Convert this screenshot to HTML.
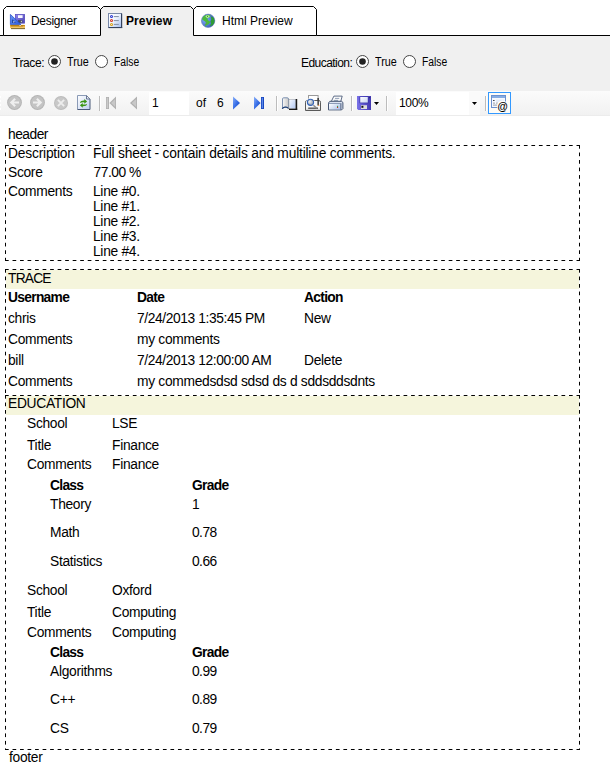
<!DOCTYPE html>
<html><head><meta charset="utf-8">
<style>
html,body{margin:0;padding:0;width:610px;height:781px;overflow:hidden;background:#fff;font-family:"Liberation Sans",sans-serif;color:#000;}
.a{position:absolute;white-space:nowrap;}
.u{font-size:12px;line-height:14px;}
.t{font-size:13.8px;line-height:15px;letter-spacing:-0.3px;}
.n{letter-spacing:-0.55px;}
.b{font-weight:bold;}
.t.b{letter-spacing:-0.7px;}
.sx{transform-origin:0 0;}
svg{position:absolute;overflow:visible;}
</style></head><body>
<!-- TAB STRIP -->
<svg style="left:0;top:0" width="610" height="37" viewBox="0 0 610 37">
  <rect x="0" y="36" width="610" height="1" fill="#f0f0f0"/>
  <path d="M3.5,36 V9.5 L6.5,6.5 H97.5 L100.5,9.5 V36 Z" fill="#fff"/>
  <path d="M100.5,37 V9.5 L103.5,6.5 H190.5 L193.5,9.5 V37 Z" fill="#f0f0f0"/>
  <path d="M193.5,36 V9.5 L196.5,6.5 H313.5 L316.5,9.5 V36 Z" fill="#fff"/>
  <path d="M0,35.5 H3.5 V9.5 L6.5,6.5 H97.5 L100.5,9.5 L103.5,6.5 H190.5 L193.5,9.5 L196.5,6.5 H313.5 L316.5,9.5 V35.5 H610" fill="none" stroke="#000" stroke-width="1"/>
  <path d="M100.5,9.5 V35.5 M193.5,9.5 V35.5 M3.5,35.5 H100.5 M193.5,35.5 H316.5" fill="none" stroke="#000" stroke-width="1"/>
</svg>
<!-- designer icon -->
<svg style="left:9px;top:13px" width="17" height="17" viewBox="0 0 17 17">
  <defs><linearGradient id="dfl" x1="0" y1="0" x2="1" y2="1"><stop offset="0" stop-color="#9088ee"/><stop offset="1" stop-color="#4a40b0"/></linearGradient>
  <linearGradient id="dtr" x1="0" y1="0" x2="1" y2="1"><stop offset="0" stop-color="#6a9af8"/><stop offset="1" stop-color="#2a58d8"/></linearGradient>
  <linearGradient id="dru" x1="0" y1="0" x2="0" y2="1"><stop offset="0" stop-color="#e0a020"/><stop offset="1" stop-color="#f8d078"/></linearGradient></defs>
  <rect x="6.2" y="1.2" width="9.6" height="9.2" fill="url(#dfl)"/>
  <rect x="6.6" y="1.6" width="8.8" height="8.4" fill="none" stroke="#5a50c0" stroke-width="0.7"/>
  <rect x="9" y="2.2" width="4.6" height="2.8" fill="#f8f8ff"/>
  <rect x="9" y="7.2" width="4.4" height="2.6" fill="#404858"/>
  <rect x="11.8" y="7.8" width="1.2" height="1.4" fill="#c0c8d0"/>
  <polygon points="1.4,1.4 1.4,11.6 12,11.6" fill="url(#dtr)" stroke="#2a50c8" stroke-width="0.8"/>
  <polygon points="3.2,6.2 3.2,10 6.8,10" fill="#183a90"/>
  <rect x="4.2" y="8.3" width="1.2" height="1.2" fill="#fff"/>
  <rect x="1" y="12" width="15" height="3.2" fill="url(#dru)"/>
  <path d="M1.5,12.4 H15.5" stroke="#b07a10" stroke-width="0.8"/>
  <path d="M3,12.4 V13.8 M5,12.4 V13.8 M7,12.4 V13.8 M9,12.4 V13.8 M11,12.4 V13.8 M13,12.4 V13.8" stroke="#a07010" stroke-width="0.8"/>
  <rect x="10.6" y="12" width="1" height="1" fill="#fff"/>
  <rect x="2" y="15.2" width="14" height="0.9" fill="#6a5008"/>
</svg>
<div class="a u" style="left:31px;top:14px;letter-spacing:-0.3px">Designer</div>
<!-- preview icon -->
<svg style="left:108px;top:13px" width="15" height="16" viewBox="0 0 15 16">
  <defs><linearGradient id="pg" x1="0" y1="0" x2="1" y2="1"><stop offset="0" stop-color="#ffffff"/><stop offset="0.45" stop-color="#eef4ff"/><stop offset="1" stop-color="#a4bcec"/></linearGradient></defs>
  <rect x="0.5" y="0.5" width="13" height="14" fill="url(#pg)" stroke="#7888a8"/>
  <rect x="13" y="0.6" width="1.2" height="14.4" fill="#34425e"/>
  <rect x="0.6" y="14" width="13.6" height="1.1" fill="#34425e"/>
  <circle cx="3.5" cy="3.5" r="1.5" fill="#2a36d0"/><circle cx="3.5" cy="3.5" r="0.5" fill="#e8ecff"/>
  <circle cx="3.5" cy="7.5" r="1.5" fill="#d03a2a"/><circle cx="3.5" cy="7.5" r="0.5" fill="#ffe8e0"/>
  <circle cx="3.5" cy="11.4" r="1.5" fill="#d8a018"/><circle cx="3.5" cy="11.4" r="0.5" fill="#fff8d8"/>
  <rect x="5.8" y="3" width="5" height="1.1" fill="#8a96aa"/>
  <rect x="5.8" y="7" width="5" height="1.1" fill="#8a96aa"/>
  <rect x="5.8" y="10.9" width="5" height="1.1" fill="#8a96aa"/>
</svg>
<div class="a u b" style="left:126px;top:14px;letter-spacing:0.1px">Preview</div>
<!-- globe icon -->
<svg style="left:201px;top:14px" width="14" height="14" viewBox="0 0 14 14">
  <defs><radialGradient id="gb" cx="0.3" cy="0.4" r="0.8"><stop offset="0" stop-color="#80b0ff"/><stop offset="1" stop-color="#3050b0"/></radialGradient>
  <clipPath id="gc"><circle cx="7.1" cy="6.8" r="6.5"/></clipPath></defs>
  <circle cx="7.1" cy="6.8" r="6.7" fill="url(#gb)" stroke="#5a70a8" stroke-width="0.5"/>
  <g clip-path="url(#gc)">
  <path d="M1,4.2 C2,1.2 5.5,0 9.6,1 L8.8,3.3 L6.2,4.5 L7.4,6.4 L9.4,8 L7.6,10.2 L5.4,11.2 L4.6,13 L4,10.6 L5.4,9 L4.2,7.6 L1.4,5.8 Z" fill="#4cb83c"/>
  <path d="M9.8,2.2 L12.6,3.4 L14,6.6 L13.4,9.6 L11.2,11.4 L8.6,12 L10.2,9.6 L9.4,7.4 L10.4,5.2 Z" fill="#2e9c34"/>
  <ellipse cx="6.6" cy="2.6" rx="2" ry="1.4" fill="#b0ec98"/>
  <circle cx="6.5" cy="2.3" r="0.55" fill="#1e6a28"/>
  <path d="M4.2,7.6 L5.4,9 L4,10.6" fill="none" stroke="#7a6a30" stroke-width="0.5" opacity="0.6"/>
  </g>
</svg>
<div class="a u" style="left:222px;top:14px">Html Preview</div>

<!-- PARAMETER PANEL -->
<div class="a" style="left:0;top:36px;width:610px;height:55px;background:#f0f0f0"></div>
<div class="a u" style="left:13px;top:56px;letter-spacing:-0.4px">Trace:</div>
<svg style="left:48px;top:55px" width="13" height="13" viewBox="0 0 13 13">
  <circle cx="6.5" cy="6.5" r="6" fill="#fff" stroke="#454545" stroke-width="1"/>
  <circle cx="6.5" cy="6.5" r="3.3" fill="#222"/>
</svg>
<div class="a u sx" style="left:67px;top:55px;transform:scaleX(0.9)">True</div>
<svg style="left:95px;top:55px" width="13" height="13" viewBox="0 0 13 13">
  <circle cx="6.5" cy="6.5" r="6" fill="#fff" stroke="#454545" stroke-width="1"/>
</svg>
<div class="a u sx" style="left:114px;top:55px;transform:scaleX(0.86)">False</div>

<div class="a u" style="left:301px;top:56px;letter-spacing:-0.55px">Education:</div>
<svg style="left:356px;top:55px" width="13" height="13" viewBox="0 0 13 13">
  <circle cx="6.5" cy="6.5" r="6" fill="#fff" stroke="#454545" stroke-width="1"/>
  <circle cx="6.5" cy="6.5" r="3.3" fill="#222"/>
</svg>
<div class="a u sx" style="left:375px;top:55px;transform:scaleX(0.9)">True</div>
<svg style="left:403px;top:55px" width="13" height="13" viewBox="0 0 13 13">
  <circle cx="6.5" cy="6.5" r="6" fill="#fff" stroke="#454545" stroke-width="1"/>
</svg>
<div class="a u sx" style="left:422px;top:55px;transform:scaleX(0.86)">False</div>

<!-- TOOLBAR -->
<div class="a" style="left:0;top:91px;width:610px;height:25px;background:linear-gradient(#fbfbfb,#f1f1f1);"></div>
<div class="a" style="left:0;top:115px;width:610px;height:1px;background:#ececec"></div>
<!-- grip -->
<svg style="left:0;top:95px" width="3" height="18" viewBox="0 0 3 18">
  <rect x="0" y="1" width="1" height="2" fill="#fff"/><rect x="0" y="5" width="1" height="2" fill="#fff"/>
  <rect x="0" y="9" width="1" height="2" fill="#fff"/><rect x="0" y="13" width="1" height="2" fill="#fff"/>
</svg>
<!-- back -->
<svg style="left:7px;top:95px" width="15" height="15" viewBox="0 0 15 15">
  <circle cx="7.5" cy="7.5" r="7.4" fill="#b4b4b4"/>
  <circle cx="7.5" cy="7.5" r="6.4" fill="#c4c4c4"/>
  <path d="M2.8,7.5 L7.4,2.9 L8.9,4.4 L6.8,6.5 H12 V8.5 H6.8 L8.9,10.6 L7.4,12.1 Z" fill="#efefef"/>
</svg>
<!-- forward -->
<svg style="left:30px;top:95px" width="15" height="15" viewBox="0 0 15 15">
  <circle cx="7.5" cy="7.5" r="7.4" fill="#b4b4b4"/>
  <circle cx="7.5" cy="7.5" r="6.4" fill="#c4c4c4"/>
  <path d="M12.2,7.5 L7.6,2.9 L6.1,4.4 L8.2,6.5 H3 V8.5 H8.2 L6.1,10.6 L7.6,12.1 Z" fill="#efefef"/>
</svg>
<!-- stop -->
<svg style="left:54px;top:96px" width="14" height="14" viewBox="0 0 14 14">
  <circle cx="7" cy="7" r="7" fill="#bcbcbc"/>
  <circle cx="7" cy="7" r="6" fill="#c8c8c8"/>
  <path d="M3.9,3.9 L10.1,10.1 M10.1,3.9 L3.9,10.1" stroke="#ededed" stroke-width="1.9"/>
</svg>
<!-- refresh doc -->
<svg style="left:77px;top:95px" width="14" height="15" viewBox="0 0 14 15">
  <defs><linearGradient id="rg" x1="0" y1="0" x2="1" y2="1"><stop offset="0" stop-color="#ffffff"/><stop offset="1" stop-color="#c0d0f0"/></linearGradient></defs>
  <path d="M0.5,0.5 H9.5 L13,4 V14.5 H0.5 Z" fill="url(#rg)"/>
  <path d="M0.5,14.5 V0.5 H9.5" fill="none" stroke="#8a9ab6"/>
  <path d="M9.5,0.5 L13,4 V14.5 H0.5" fill="none" stroke="#4a5a78"/>
  <path d="M9.5,0.8 V4 H12.8" fill="#e8eef8" stroke="#5a6a88" stroke-width="0.9"/>
  <path d="M3,7.9 C3.2,6.2 5,5.5 7.3,5.6 L7.3,4.1 L10.1,6.5 L7.3,8.8 L7.3,7.3 C5.8,7.2 4.2,7.3 3,7.9 Z" fill="#3a9612"/>
  <path d="M10.1,9 C9.9,10.7 8.1,11.3 5.7,11.2 L5.7,12.8 L2.9,10.3 L5.7,8 L5.7,9.6 C7.2,9.7 8.9,9.5 10.1,9 Z" fill="#3a9612"/>
</svg>
<!-- sep -->
<div class="a" style="left:99px;top:96px;width:1px;height:15px;background:#bcbcbc"></div>
<div class="a" style="left:100px;top:96px;width:1px;height:15px;background:#fff"></div>
<!-- first -->
<svg style="left:105px;top:96px" width="12" height="14" viewBox="0 0 12 14">
  <rect x="1" y="1" width="3" height="12" fill="#b0b0b0"/>
  <rect x="1.7" y="1.7" width="1.4" height="10.6" fill="#cacaca"/>
  <polygon points="4.4,7 11,0.6 11,13.4" fill="#b0b0b0"/>
  <polygon points="6,7 10.2,3 10.2,11" fill="#c8c8c8"/>
</svg>
<!-- prev -->
<svg style="left:129px;top:96px" width="9" height="14" viewBox="0 0 9 14">
  <polygon points="1,7 8,0.6 8,13.4" fill="#b0b0b0"/>
  <polygon points="2.8,7 7.2,3 7.2,11" fill="#c8c8c8"/>
</svg>
<!-- page box -->
<div class="a" style="left:149px;top:92px;width:40px;height:23px;background:#fff"></div>
<div class="a u" style="left:152px;top:96px">1</div>
<div class="a u" style="left:196px;top:96px">of</div>
<div class="a u" style="left:217px;top:96px">6</div>
<!-- next -->
<svg style="left:232px;top:96px" width="9" height="14" viewBox="0 0 9 14">
  <defs><linearGradient id="bl" x1="0" y1="0" x2="1" y2="1"><stop offset="0" stop-color="#8ab0f8"/><stop offset="0.5" stop-color="#3a70e8"/><stop offset="1" stop-color="#1040b8"/></linearGradient></defs>
  <polygon points="8,7 1,0.6 1,13.4" fill="url(#bl)"/>
</svg>
<!-- last -->
<svg style="left:253px;top:96px" width="12" height="14" viewBox="0 0 12 14">
  <polygon points="7.6,7 1,0.6 1,13.4" fill="url(#bl)"/>
  <rect x="8" y="1" width="3" height="12" fill="#1a48c0"/>
  <rect x="8.8" y="1.8" width="1.2" height="10.4" fill="#5a88e8"/>
</svg>
<!-- sep -->
<div class="a" style="left:276px;top:96px;width:1px;height:15px;background:#bcbcbc"></div>
<div class="a" style="left:277px;top:96px;width:1px;height:15px;background:#fff"></div>
<!-- book -->
<svg style="left:281px;top:96px" width="17" height="15" viewBox="0 0 17 15">
  <defs>
    <linearGradient id="bk" x1="0" y1="0" x2="1" y2="1"><stop offset="0" stop-color="#f4f8ff"/><stop offset="1" stop-color="#b0c6f2"/></linearGradient>
    <linearGradient id="bm" x1="0" y1="0" x2="1" y2="0"><stop offset="0" stop-color="#f8f8f8"/><stop offset="1" stop-color="#c8c8c8"/></linearGradient>
  </defs>
  <path d="M1.5,12.6 V2.8 C1.5,2.1 2,1.8 2.8,1.8 H6.2 C7,1.8 7.5,2.1 7.5,2.8 V12.6 C6.6,10.6 2.4,10.6 1.5,12.6 Z" fill="url(#bm)" stroke="#7088aa" stroke-width="0.9"/>
  <path d="M1.3,12.8 C2.4,10.6 6.6,10.6 7.7,12.8" fill="none" stroke="#244478" stroke-width="1.3"/>
  <path d="M8,3.5 H14.5 M8,3.5 V13" stroke="#a0a0a0"/>
  <rect x="8.5" y="3.5" width="6.2" height="9" fill="url(#bk)"/>
  <rect x="14.6" y="3" width="1.6" height="11" fill="#181818"/>
  <rect x="8" y="12.6" width="8.2" height="1.4" fill="#181818"/>
</svg>
<!-- page setup -->
<svg style="left:304px;top:94px" width="18" height="18" viewBox="0 0 18 18">
  <defs><radialGradient id="lens" cx="0.4" cy="0.4" r="0.6"><stop offset="0" stop-color="#f4f6f8"/><stop offset="1" stop-color="#8a96a6"/></radialGradient></defs>
  <rect x="4.5" y="1.5" width="9.6" height="8" fill="#fff" stroke="#9a9a9a"/>
  <path d="M3.2,6.5 Q1.5,6.5 1.5,8.2 V16.5 H16.5 V8.2 Q16.5,6.5 14.8,6.5 Z" fill="#f6f6f6" stroke="#5a5a5a"/>
  <rect x="2" y="14.6" width="14" height="1.4" fill="#d8d8d8"/>
  <rect x="4.2" y="13.6" width="9.8" height="1.1" fill="#2a2a2a"/>
  <rect x="13.4" y="4" width="1.5" height="7.5" fill="#383838"/>
  <rect x="14.2" y="10.8" width="1.1" height="1.1" fill="#f08a30"/>
  <circle cx="6.5" cy="8.3" r="4.3" fill="#fff" opacity="0.8"/>
  <path d="M9.4,11.2 L12.8,14.2" stroke="#8a8a8a" stroke-width="1.4"/>
  <circle cx="6.5" cy="8.3" r="3.1" fill="url(#lens)" stroke="#3464b8" stroke-width="1.1"/>
</svg>
<!-- printer -->
<svg style="left:327px;top:95px" width="17" height="16" viewBox="0 0 17 16">
  <defs>
    <linearGradient id="pr" x1="0" y1="0" x2="1" y2="0.6"><stop offset="0" stop-color="#ffffff"/><stop offset="1" stop-color="#b4c8ec"/></linearGradient>
  </defs>
  <path d="M6.9,1.1 H15.2 L13.6,7 H4 Z" fill="#fbfbfb" stroke="#4e5e7c" stroke-width="0.9"/>
  <rect x="8" y="2.9" width="4.2" height="0.8" fill="#7888a4"/>
  <rect x="6.9" y="4.9" width="4.2" height="0.8" fill="#7888a4"/>
  <path d="M1.5,8 L2.8,6.3 H14.6 L15.9,7.4 V13.6 L14.6,14.9 H1.5 Z" fill="#dce4f2" stroke="#3e4e6c" stroke-width="0.95"/>
  <rect x="2" y="8.8" width="11.6" height="5.6" fill="url(#pr)"/>
  <path d="M13.9,8.2 V14.6" stroke="#3e4e6c" stroke-width="0.9"/>
  <rect x="1.6" y="8" width="12.3" height="0.9" fill="#8494b0"/>
  <rect x="10" y="10.8" width="1.1" height="1.1" fill="#30a030"/>
  <rect x="10" y="11.9" width="1.1" height="1.1" fill="#d03020"/>
</svg>
<!-- sep -->
<div class="a" style="left:351px;top:96px;width:1px;height:15px;background:#bcbcbc"></div>
<div class="a" style="left:352px;top:96px;width:1px;height:15px;background:#fff"></div>
<!-- floppy -->
<svg style="left:357px;top:96px" width="15" height="14" viewBox="0 0 15 14">
  <defs>
    <linearGradient id="fl" x1="0" y1="0" x2="1" y2="0"><stop offset="0" stop-color="#7a72e8"/><stop offset="1" stop-color="#4238b0"/></linearGradient>
    <linearGradient id="lb" x1="0" y1="0" x2="1" y2="1"><stop offset="0" stop-color="#ffffff"/><stop offset="1" stop-color="#c8d4f4"/></linearGradient>
  </defs>
  <path d="M0,0 H14 V14 H1.2 L0,12.8 Z" fill="url(#fl)"/>
  <rect x="2.6" y="0.6" width="8.8" height="6.6" fill="#2e28a0"/>
  <rect x="3.2" y="1" width="7.6" height="5.6" fill="url(#lb)"/>
  <rect x="4" y="9.2" width="6" height="3.8" fill="#dedede"/>
  <rect x="4.4" y="9.8" width="2" height="2" fill="#101018"/>
  <rect x="12.2" y="1.2" width="1" height="1" fill="#202060"/>
</svg>
<svg style="left:374px;top:102px" width="5" height="3" viewBox="0 0 5 3"><polygon points="0,0 5,0 2.5,3" fill="#000"/></svg>
<!-- sep -->
<div class="a" style="left:386px;top:96px;width:1px;height:15px;background:#bcbcbc"></div>
<div class="a" style="left:387px;top:96px;width:1px;height:15px;background:#fff"></div>
<!-- zoom combo -->
<div class="a" style="left:396px;top:92px;width:73px;height:23px;background:#fff"></div>
<div class="a" style="left:469px;top:92px;width:11px;height:23px;background:#fafafa"></div>
<div class="a u" style="left:399px;top:96px;letter-spacing:-0.3px">100%</div>
<svg style="left:472px;top:102px" width="5" height="3" viewBox="0 0 5 3"><polygon points="0,0 5,0 2.5,3" fill="#000"/></svg>
<!-- sep -->
<div class="a" style="left:485px;top:96px;width:1px;height:15px;background:#bcbcbc"></div>
<div class="a" style="left:486px;top:96px;width:1px;height:15px;background:#fff"></div>
<!-- email button -->
<div class="a" style="left:488px;top:92px;width:21px;height:20px;border:1px solid #3399ff;background:#fefcf7"></div>
<svg style="left:491px;top:95px" width="17" height="17" viewBox="0 0 17 17">
  <rect x="0.5" y="0.5" width="14" height="12" fill="#f6f9ff" stroke="#6a90d0"/>
  <rect x="1" y="1" width="13" height="2" fill="#86ace2"/>
  <rect x="5" y="4.6" width="8" height="2.4" fill="#e4ecf8"/>
  <rect x="2" y="5" width="1.6" height="1" fill="#404850"/>
  <rect x="2" y="7.6" width="2" height="1" fill="#98a0a8"/><rect x="5" y="7.6" width="2" height="1" fill="#98a0a8"/>
  <rect x="2" y="9.6" width="5" height="1" fill="#98a0a8"/>
  <circle cx="11.5" cy="11" r="5.6" fill="#fff" opacity="0.9"/>
  <text x="6.6" y="14.6" font-family="Liberation Sans" font-size="10.5" font-weight="bold" fill="#000">@</text>
</svg>

<div class="a t" style="left:8px;top:127px;letter-spacing:-0.5px">header</div>
<svg style="left:0;top:0" width="610" height="781" viewBox="0 0 610 781">
  <g fill="none" stroke="#000" stroke-width="1" stroke-dasharray="3.7 3.82">
    <path d="M5,145.5 H580"/><path d="M5,260.5 H580"/>
    <path d="M5.5,145 V261"/><path d="M579.5,145 V261"/>
    <path d="M5,749.5 H580"/>
  </g>
</svg>
<div class="a" style="left:6px;top:270px;width:573px;height:19px;background:#f5f5dc"></div>
<div class="a" style="left:6px;top:396px;width:573px;height:19px;background:#f5f5dc"></div>
<svg style="left:0;top:0" width="610" height="781" viewBox="0 0 610 781">
  <g fill="none" stroke="#000" stroke-width="1" stroke-dasharray="3.7 3.82">
    <path d="M5,269.5 H580"/><path d="M5.5,269 V396"/><path d="M579.5,269 V396"/>
    <path d="M5,395.5 H580"/><path d="M5.5,395 V750"/><path d="M579.5,395 V750"/>
  </g>
</svg>

<div class="a t" style="left:8px;top:146px;letter-spacing:-0.2px">Description</div>
<div class="a t" style="left:93px;top:146px;letter-spacing:-0.2px">Full sheet - contain details and multiline comments.</div>
<div class="a t" style="left:8px;top:165px">Score</div>
<div class="a t" style="left:93.6px;top:165px;letter-spacing:-0.5px">77.00 %</div>
<div class="a t" style="left:8px;top:184px">Comments</div>
<div class="a t" style="left:93px;top:184px">Line #0.<br>Line #1.<br>Line #2.<br>Line #3.<br>Line #4.</div>

<div class="a t" style="left:8px;top:271px;letter-spacing:-0.8px">TRACE</div>
<div class="a t b" style="left:8px;top:290px">Username</div>
<div class="a t b" style="left:137px;top:290px">Date</div>
<div class="a t b" style="left:304px;top:290px">Action</div>
<div class="a t" style="left:8px;top:311px">chris</div>
<div class="a t" style="left:137px;top:311px;letter-spacing:-0.4px">7/24/2013 1:35:45 PM</div>
<div class="a t" style="left:304px;top:311px">New</div>
<div class="a t" style="left:8px;top:332px">Comments</div>
<div class="a t" style="left:137px;top:332px">my comments</div>
<div class="a t" style="left:8px;top:353px">bill</div>
<div class="a t" style="left:137px;top:353px;letter-spacing:-0.4px">7/24/2013 12:00:00 AM</div>
<div class="a t" style="left:304px;top:353px">Delete</div>
<div class="a t" style="left:8px;top:374px">Comments</div>
<div class="a t" style="left:137px;top:374px">my commedsdsd sdsd ds d sddsddsdnts</div>

<div class="a t" style="left:8px;top:396px;letter-spacing:-0.3px">EDUCATION</div>
<div class="a t" style="left:27px;top:416px">School</div>
<div class="a t" style="left:112px;top:416px">LSE</div>
<div class="a t" style="left:27px;top:438px">Title</div>
<div class="a t" style="left:112px;top:438px">Finance</div>
<div class="a t" style="left:27px;top:457px">Comments</div>
<div class="a t" style="left:112px;top:457px">Finance</div>
<div class="a t b" style="left:50px;top:478px">Class</div>
<div class="a t b" style="left:192px;top:478px">Grade</div>
<div class="a t" style="left:50px;top:497px">Theory</div>
<div class="a t n" style="left:192px;top:497px">1</div>
<div class="a t" style="left:50px;top:525px">Math</div>
<div class="a t n" style="left:192px;top:525px">0.78</div>
<div class="a t" style="left:50px;top:554px">Statistics</div>
<div class="a t n" style="left:192px;top:554px">0.66</div>

<div class="a t" style="left:27px;top:583px">School</div>
<div class="a t" style="left:112px;top:583px">Oxford</div>
<div class="a t" style="left:27px;top:605px">Title</div>
<div class="a t" style="left:112px;top:605px">Computing</div>
<div class="a t" style="left:27px;top:625px">Comments</div>
<div class="a t" style="left:112px;top:625px">Computing</div>
<div class="a t b" style="left:50px;top:645px">Class</div>
<div class="a t b" style="left:192px;top:645px">Grade</div>
<div class="a t" style="left:50px;top:664px">Algorithms</div>
<div class="a t n" style="left:192px;top:664px">0.99</div>
<div class="a t" style="left:50px;top:692px">C++</div>
<div class="a t n" style="left:192px;top:692px">0.89</div>
<div class="a t" style="left:50px;top:721px">CS</div>
<div class="a t n" style="left:192px;top:721px">0.79</div>

<div class="a t" style="left:9px;top:750px">footer</div>
</body></html>
